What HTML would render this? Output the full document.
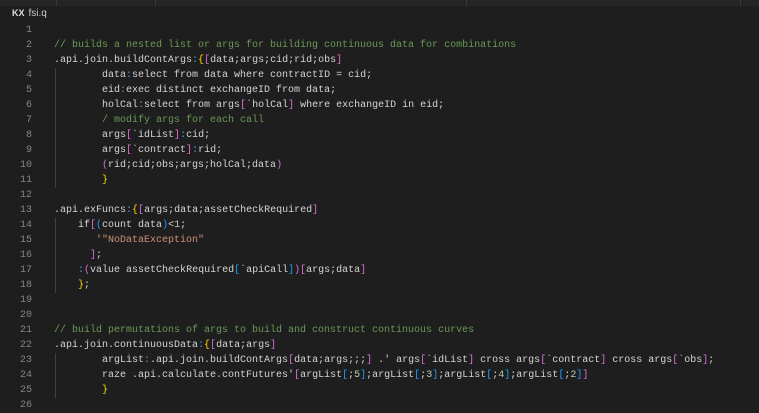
<!DOCTYPE html><html><head><style>
body{margin:0;width:759px;height:406px;background:#1e1e1e;overflow:hidden;font-family:"Liberation Mono",monospace;}
.top{position:absolute;left:0;top:0;width:759px;height:6px;background:#252526;}
.top i{position:absolute;top:0;width:1px;height:6px;background:#3a3a3a}
.tab{position:absolute;left:12px;top:8px;font:10px "Liberation Sans",sans-serif;color:#ccc;}
.tab b{font-size:9px;margin-right:4px;color:#ddd}
.ln{position:absolute;left:0;width:32px;text-align:right;color:#858585;font-size:10px;line-height:15px}
.code{position:absolute;left:54px;top:23px;font-size:10px;line-height:15px;color:#d4d4d4;white-space:pre}
.g{position:absolute;left:55px;width:1px;background:#404040}
.c{color:#6a9955}.b{color:#569cd6}.y{color:#ffd700}.p{color:#da70d6}.u{color:#179fff}.s{color:#ce9178}.n{color:#b5cea8}
</style></head><body>
<div class="top"><i style="left:56px"></i><i style="left:155px"></i><i style="left:466px"></i><i style="left:740px"></i></div>
<div class="tab"><b>KX</b>fsi.q</div>
<div class="g" style="top:68px;height:120px"></div>
<div class="g" style="top:218px;height:75px"></div>
<div class="g" style="top:353px;height:45px"></div>
<div class="ln" style="top:23px">1<br>2<br>3<br>4<br>5<br>6<br>7<br>8<br>9<br>10<br>11<br>12<br>13<br>14<br>15<br>16<br>17<br>18<br>19<br>20<br>21<br>22<br>23<br>24<br>25<br>26</div>
<div class="code">
<span class="c">// builds a nested list or args for building continuous data for combinations</span>
.api.join.buildContArgs<span class="b">:</span><span class="y">{</span><span class="p">[</span>data;args;cid;rid;obs<span class="p">]</span>
        data<span class="b">:</span>select from data where contractID = cid;
        eid<span class="b">:</span>exec distinct exchangeID from data;
        holCal<span class="b">:</span>select from args<span class="p">[</span>`holCal<span class="p">]</span> where exchangeID in eid;
        <span class="c">/ modify args for each call</span>
        args<span class="p">[</span>`idList<span class="p">]</span><span class="b">:</span>cid;
        args<span class="p">[</span>`contract<span class="p">]</span><span class="b">:</span>rid;
        <span class="p">(</span>rid;cid;obs;args;holCal;data<span class="p">)</span>
        <span class="y">}</span>

.api.exFuncs<span class="b">:</span><span class="y">{</span><span class="p">[</span>args;data;assetCheckRequired<span class="p">]</span>
    if<span class="p">[</span><span class="u">(</span>count data<span class="u">)</span>&lt;<span class="n">1</span>;
       <span class="s">'"NoDataException"</span>
      <span class="p">]</span>;
    <span class="b">:</span><span class="p">(</span>value assetCheckRequired<span class="u">[</span>`apiCall<span class="u">]</span><span class="p">)</span><span class="p">[</span>args;data<span class="p">]</span>
    <span class="y">}</span>;


<span class="c">// build permutations of args to build and construct continuous curves</span>
.api.join.continuousData<span class="b">:</span><span class="y">{</span><span class="p">[</span>data;args<span class="p">]</span>
        argList<span class="b">:</span>.api.join.buildContArgs<span class="p">[</span>data;args;;;<span class="p">]</span> .' args<span class="p">[</span>`idList<span class="p">]</span> cross args<span class="p">[</span>`contract<span class="p">]</span> cross args<span class="p">[</span>`obs<span class="p">]</span>;
        raze .api.calculate.contFutures'<span class="p">[</span>argList<span class="u">[</span>;<span class="n">5</span><span class="u">]</span>;argList<span class="u">[</span>;<span class="n">3</span><span class="u">]</span>;argList<span class="u">[</span>;<span class="n">4</span><span class="u">]</span>;argList<span class="u">[</span>;<span class="n">2</span><span class="u">]</span><span class="p">]</span>
        <span class="y">}</span>
</div>
</body></html>
